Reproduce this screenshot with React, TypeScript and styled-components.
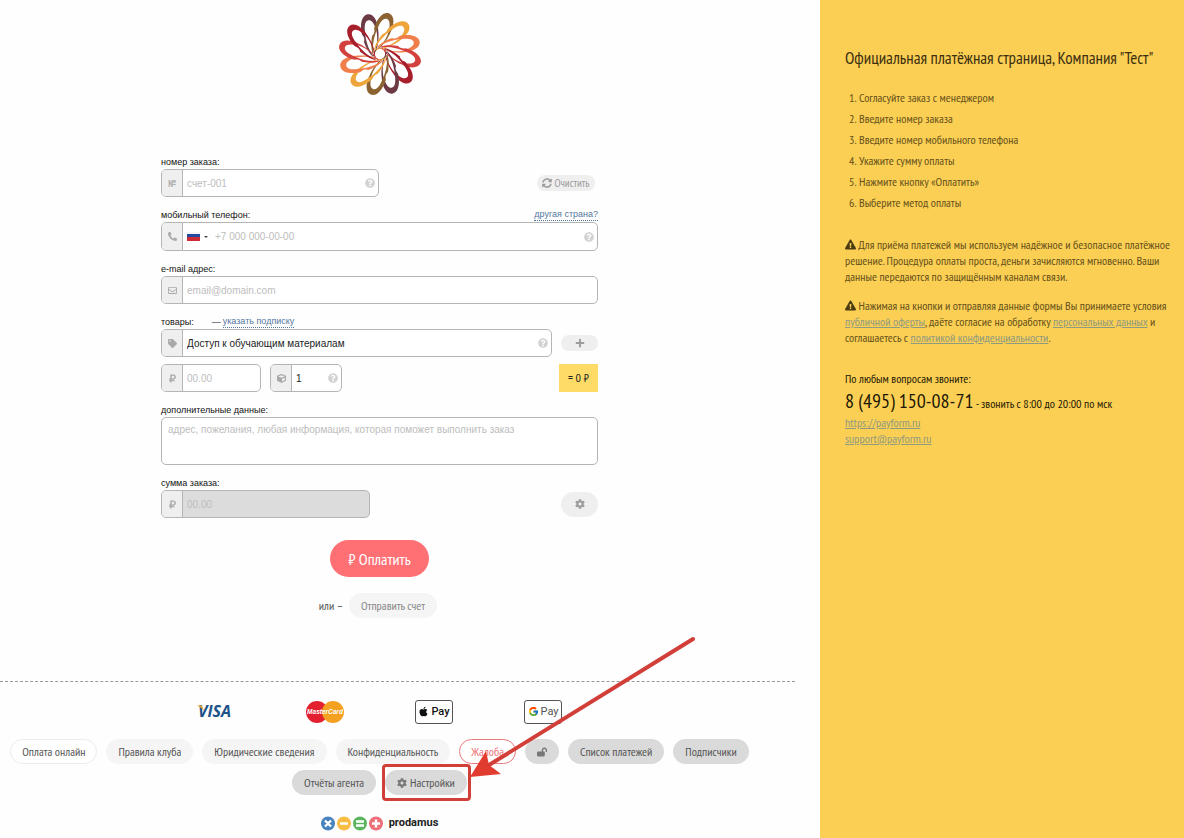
import React from "react";
import styled, { createGlobalStyle, css } from "styled-components";
import {
  FaApple,
  FaCog,
  FaCube,
  FaExclamationTriangle,
  FaLockOpen,
  FaPhoneAlt,
  FaPlus,
  FaQuestionCircle,
  FaRegEnvelope,
  FaRubleSign,
  FaSyncAlt,
  FaTag,
} from "react-icons/fa";
import { FcGoogle } from "react-icons/fc";

const narrow = `"PT Sans Narrow", "Liberation Sans Narrow", "Open Sans", sans-serif`;
const sans = `"Liberation Sans", Arial, sans-serif`;
const border = "#b5b5b5";

const GlobalStyle = createGlobalStyle`
  *, *::before, *::after { box-sizing: border-box; }
  body { margin: 0; background: #fefefe; font-family: ${narrow}; font-size: 12px; color: #555; }
  button, input, textarea { font: inherit; margin: 0; }
`;

const Page = styled.div`
  display: grid;
  grid-template-columns: minmax(0, 1fr) 364px;
  min-height: 100vh;
`;

const Main = styled.main`
  padding: 12px 25px 0 0;
`;

const Section = styled.div`
  display: flex;
  flex-direction: column;
  align-items: center;
  padding-right: 36px;
`;

const LogoBox = styled.div`
  height: 83px;
  margin-bottom: 60px;
`;

const Form = styled.form`
  width: 437px;
  max-width: 100%;
  display: flex;
  flex-direction: column;
  gap: 11px;
`;

const Field = styled.div`
  display: flex;
  flex-direction: column;
`;

const LabelRow = styled.div`
  display: flex;
  align-items: center;
  height: 14px;
  font: 9px/14px ${sans};
  color: #111;
`;

const Dash = styled.span`
  margin: 0 2px 0 18px;
`;

const DottedLink = styled.a<{ $end?: boolean }>`
  color: #54789f;
  line-height: 11px;
  text-decoration: none;
  border-bottom: 1px dotted #54789f;
  ${(p) => p.$end && css`margin-left: auto;`}
`;

const Line = styled.div<{ $gap?: number; $top?: number }>`
  display: flex;
  align-items: center;
  gap: ${(p) => p.$gap ?? 9}px;
  margin-top: ${(p) => p.$top ?? 0}px;
`;

const Push = styled.span<{ $inset?: number }>`
  margin-left: auto;
  padding-right: ${(p) => p.$inset ?? 0}px;
  display: flex;
`;

const Group = styled.div<{ $width?: number; $tall?: boolean; $filled?: boolean }>`
  display: flex;
  height: ${(p) => (p.$tall ? 29 : 28)}px;
  ${(p) => (p.$width ? css`width: ${p.$width}px;` : css`flex: 1 1 auto;`)}
  min-width: 0;
  border: 1px solid ${border};
  border-radius: 5px;
  overflow: hidden;
  background: ${(p) => (p.$filled ? "#dcdcdc" : "#fff")};
`;

const Addon = styled.span`
  flex: 0 0 21px;
  display: flex;
  align-items: center;
  justify-content: center;
  border-right: 1px solid ${border};
  background: #efefef;
  color: #a9a9a9;
  font-size: 9px;
  font-weight: bold;
`;

const Input = styled.input`
  flex: 1 1 0;
  min-width: 0;
  border: 0;
  padding: 0 4px;
  background: transparent;
  outline: none;
  font: 10px ${sans};
  color: #222;
  &::placeholder { color: #bdbdbd; opacity: 1; }
`;

const Hint = styled.span`
  display: flex;
  align-items: center;
  padding-right: 3px;
  font-size: 10px;
  color: #d2d2d2;
`;

const Country = styled.button`
  display: flex;
  align-items: center;
  gap: 4px;
  width: 28px;
  padding: 0 0 0 4px;
  border: 0;
  background: none;
`;

const Flag = styled.span`
  width: 13px;
  height: 9px;
  background: linear-gradient(#f4f4f4 0 2px, #2449a0 2px 5px, #cf2b36 5px 9px);
`;

const Caret = styled.span`
  border: 2px solid transparent;
  border-top-color: #444;
  border-bottom: 0;
`;

const Notes = styled.textarea`
  height: 48px;
  padding: 5px 6px;
  border: 1px solid ${border};
  border-radius: 5px;
  background: #fff;
  outline: none;
  resize: none;
  font: 10px/14px ${sans};
  &::placeholder { color: #bdbdbd; opacity: 1; }
`;

const Soft = styled.button<{ $height: number; $width?: number }>`
  display: flex;
  align-items: center;
  justify-content: center;
  gap: 2px;
  width: ${(p) => p.$width ?? 37}px;
  height: ${(p) => p.$height}px;
  padding: 0;
  border: 0;
  border-radius: 13px;
  background: #efefef;
  color: #9c9c9c;
  font-size: 11px;
  svg { font-size: 10px; }
`;

const Total = styled.output`
  width: 39px;
  height: 28px;
  background: #fddb66;
  color: #222;
  text-align: center;
  font-size: 12px;
  line-height: 28px;
`;

const Pay = styled.button`
  width: 99px;
  height: 37px;
  margin: 22px 0 16px;
  border: 0;
  border-radius: 19px;
  background: #ff7075;
  color: #fff;
  font-size: 16px;
`;

const pillTones = {
  outline: css`background: #fff; border-color: #ececec; color: #555;`,
  light: css`background: #f5f5f5; color: #555;`,
  dark: css`background: #dadada; color: #555;`,
  danger: css`background: #fff; border-color: #e87b7e; color: #ee7478;`,
};

const Pill = styled.button<{ $tone: keyof typeof pillTones }>`
  display: flex;
  align-items: center;
  gap: 3px;
  height: 25px;
  padding: 0 11px;
  border: 1px solid transparent;
  border-radius: 13px;
  font-size: 12px;
  white-space: nowrap;
  ${(p) => pillTones[p.$tone]}
  svg { color: #777; font-size: 10px; }
`;

const Or = styled.div`
  display: flex;
  align-items: center;
  gap: 6px;
  padding-right: 3px;
  button { color: #888; }
`;

const Divider = styled.hr`
  margin: 63px 0 17px;
  border: 0;
  border-top: 1px dashed #999;
`;

const Brands = styled.div`
  display: flex;
  align-items: center;
  gap: 71px;
  height: 25px;
  margin-bottom: 15px;
`;

const PayMark = styled.span<{ $strong?: boolean }>`
  display: flex;
  align-items: center;
  justify-content: center;
  gap: 2px;
  width: 38px;
  height: 24px;
  border: 1px solid #555;
  border-radius: 3px;
  background: #fff;
  color: ${(p) => (p.$strong ? "#111" : "#555")};
  font: ${(p) => (p.$strong ? 500 : 400)} 11px Roboto, ${sans};
`;

const Links = styled.nav`
  display: flex;
  flex-direction: column;
  gap: 6px;
`;

const PillRow = styled.div`
  display: flex;
  flex-wrap: wrap;
  justify-content: center;
  gap: 6px 9px;
`;

const Marked = styled.div`
  position: relative;
  &::after {
    content: "";
    position: absolute;
    inset: -6px -4px -6px -3px;
    border: 3px solid #d13f38;
    border-radius: 4px;
    pointer-events: none;
  }
`;

const Arrow = styled.svg`
  position: absolute;
  left: 100%;
  bottom: 12px;
  z-index: 1;
  pointer-events: none;
`;

const Brand = styled.a`
  display: flex;
  align-items: center;
  gap: 6px;
  margin: 20px 0 7px;
  color: #222;
  font: bold 11px/16px Roboto, sans-serif;
  text-decoration: none;
`;

const Side = styled.aside`
  padding: 46px 10px 0 25px;
  background: #fbcf54;
  color: #65501a;
  font-size: 12px;
  line-height: 16px;
`;

const Title = styled.h1`
  margin: 0 0 17px;
  color: #3d3010;
  font-size: 17px;
  font-weight: normal;
  line-height: 24px;
`;

const Steps = styled.ol`
  margin: 0 0 24px;
  padding: 0;
  list-style: none;
  counter-reset: step;
  line-height: 21px;
  li { counter-increment: step; padding-left: 4px; }
  li::before { content: counter(step) "."; display: inline-block; width: 10px; }
`;

const Note = styled.p`
  margin: 0 0 13px;
  svg { color: #4b3b12; font-size: 11px; vertical-align: -1px; }
`;

const SideLink = styled.a`
  color: #8f9a80;
`;

const Contacts = styled.address`
  margin-top: 25px;
  color: #1d1705;
  font-style: normal;
`;

const Phone = styled.div`
  margin-top: 3px;
  line-height: 22px;
  b { font-size: 20px; font-weight: normal; }
`;

const petals = [
  "#6b3a45", "#8c6330", "#eda53c", "#f07f4c", "#d3413f", "#a81f2c",
  "#6b3a45", "#8c6330", "#eda53c", "#f07f4c", "#d3413f", "#a81f2c",
];

const petalTurn = (i: number) => `rotate(${-17 + i * 30}) translate(0 -41.5) rotate(10)`;

const FlowerLogo = () => (
  <svg width="84" height="84" viewBox="-42 -42 84 84" role="img" aria-label="Логотип">
    {petals.map((color, i) => (
      <g key={i} transform={petalTurn(i)}>
        <path
          fill={color}
          fillRule="evenodd"
          d="M0 0C5.500 0 8.500 7 8.500 15C8.500 27 5 37 0 43C-5 37 -8.500 27 -8.500 15C-8.500 7 -5.500 0 0 0ZM0 6C-4 6 -5 12 -5 17C-5.500 27 -3.500 35 0 41.500C4 36 7.500 27 6.500 17C5.500 12 4 6 0 6Z"
        />
      </g>
    ))}
    {petals.map((_, i) => (
      <g key={i} transform={petalTurn(i)}>
        <path
          fill="#fff"
          d="M0 6.500C-3.500 6.500 -4.500 12 -4.200 16C-4 20 -2 22 0 22C2 22 4.500 20 4.600 16C4.500 12 3.500 6.500 0 6.500Z"
        />
      </g>
    ))}
    <circle r="5" fill="#fff" />
  </svg>
);

const Visa = () => (
  <svg width="38" height="24" viewBox="0 0 38 24" role="img" aria-label="VISA">
    <text x="1" y="17" fontFamily="Open Sans, sans-serif" fontSize="16" fontWeight="700" fontStyle="italic" fill="#1c5288">VISA</text>
    <path d="M0 5.500H5L7 11Q4 7 0 5.500Z" fill="#e9a63a" />
  </svg>
);

const MasterCard = () => (
  <svg width="38" height="24" viewBox="0 0 38 24" role="img" aria-label="MasterCard">
    <circle cx="11" cy="12" r="11" fill="#e3202f" />
    <circle cx="27" cy="12" r="11" fill="#f4a020" />
    <text x="19" y="14" textAnchor="middle" fontFamily="Liberation Sans, sans-serif" fontSize="6.500" fontWeight="bold" fontStyle="italic" fill="#fff">MasterCard</text>
  </svg>
);

const ProdamusMark = () => (
  <svg width="62" height="15" viewBox="0 0 62 15" aria-hidden="true">
    <circle cx="7" cy="7.500" r="7" fill="#4883bd" />
    <circle cx="23" cy="7.500" r="7" fill="#f9bd45" />
    <circle cx="39" cy="7.500" r="7" fill="#5cb562" />
    <circle cx="55" cy="7.500" r="7" fill="#ec6f7a" />
    <g stroke="#fff" strokeWidth="2.400">
      <path d="M4 4.500L10 10.500M10 4.500L4 10.500M19 7.500H27M35 5.500H43M35 9.500H43M51 7.500H59M55 3.500V11.500" />
    </g>
  </svg>
);

const Help = () => (
  <Hint>
    <FaQuestionCircle />
  </Hint>
);

const steps = [
  "Согласуйте заказ с менеджером",
  "Введите номер заказа",
  "Введите номер мобильного телефона",
  "Укажите сумму оплаты",
  "Нажмите кнопку «Оплатить»",
  "Выберите метод оплаты",
];

export default function App() {
  return (
    <Page>
      <GlobalStyle />
      <Main>
        <Section>
          <LogoBox>
            <FlowerLogo />
          </LogoBox>
          <Form onSubmit={(e) => e.preventDefault()}>
            <Field>
              <LabelRow>
                <label htmlFor="order">номер заказа:</label>
              </LabelRow>
              <Line>
                <Group $width={218}>
                  <Addon>№</Addon>
                  <Input id="order" placeholder="счет-001" />
                  <Help />
                </Group>
                <Push $inset={3}>
                  <Soft type="reset" $height={16} $width={58}>
                    <FaSyncAlt /> Очистить
                  </Soft>
                </Push>
              </Line>
            </Field>
            <Field>
              <LabelRow>
                <label htmlFor="phone">мобильный телефон:</label>
                <DottedLink href="#country" $end>другая страна?</DottedLink>
              </LabelRow>
              <Group $tall>
                <Addon><FaPhoneAlt /></Addon>
                <Country type="button" aria-label="Россия">
                  <Flag />
                  <Caret />
                </Country>
                <Input id="phone" type="tel" placeholder="+7 000 000-00-00" />
                <Help />
              </Group>
            </Field>
            <Field>
              <LabelRow>
                <label htmlFor="email">e-mail адрес:</label>
              </LabelRow>
              <Line>
                <Group>
                  <Addon><FaRegEnvelope /></Addon>
                  <Input id="email" type="email" placeholder="email@domain.com" />
                </Group>
              </Line>
            </Field>
            <Field>
              <LabelRow>
                <label htmlFor="goods">товары:</label>
                <Dash>—</Dash>
                <DottedLink href="#subscription">указать подписку</DottedLink>
              </LabelRow>
              <Line $gap={9}>
                <Group>
                  <Addon><FaTag /></Addon>
                  <Input id="goods" defaultValue="Доступ к обучающим материалам" />
                  <Help />
                </Group>
                <Soft type="button" $height={16} aria-label="Добавить товар"><FaPlus /></Soft>
              </Line>
              <Line $top={7}>
                <Group $width={100}>
                  <Addon><FaRubleSign /></Addon>
                  <Input aria-label="Цена" placeholder="00.00" />
                </Group>
                <Group $width={72}>
                  <Addon><FaCube /></Addon>
                  <Input aria-label="Количество" defaultValue="1" />
                  <Help />
                </Group>
                <Push>
                  <Total>= 0 ₽</Total>
                </Push>
              </Line>
            </Field>
            <Field>
              <LabelRow>
                <label htmlFor="notes">дополнительные данные:</label>
              </LabelRow>
              <Notes id="notes" placeholder="адрес, пожелания, любая информация, которая поможет выполнить заказ" />
            </Field>
            <Field>
              <LabelRow>
                <label htmlFor="sum">сумма заказа:</label>
              </LabelRow>
              <Line>
                <Group $width={209} $filled>
                  <Addon><FaRubleSign /></Addon>
                  <Input id="sum" placeholder="00.00" readOnly />
                </Group>
                <Push>
                  <Soft type="button" $height={25} aria-label="Параметры"><FaCog /></Soft>
                </Push>
              </Line>
            </Field>
          </Form>
          <Pay type="submit">₽ Оплатить</Pay>
          <Or>
            или –
            <Pill type="button" $tone="light">Отправить счет</Pill>
          </Or>
        </Section>
        <Divider />
        <Section>
          <Brands>
            <Visa />
            <MasterCard />
            <PayMark $strong><FaApple /> Pay</PayMark>
            <PayMark><FcGoogle /> Pay</PayMark>
          </Brands>
          <Links>
            <PillRow>
              <Pill $tone="outline">Оплата онлайн</Pill>
              <Pill $tone="light">Правила клуба</Pill>
              <Pill $tone="light">Юридические сведения</Pill>
              <Pill $tone="light">Конфиденциальность</Pill>
              <Pill $tone="danger">Жалоба</Pill>
              <Pill $tone="dark" aria-label="Доступ"><FaLockOpen /></Pill>
              <Pill $tone="dark">Список платежей</Pill>
              <Pill $tone="dark">Подписчики</Pill>
            </PillRow>
            <PillRow>
              <Pill $tone="dark">Отчёты агента</Pill>
              <Marked>
                <Pill $tone="dark"><FaCog /> Настройки</Pill>
                <Arrow width="230" height="150" viewBox="0 0 230 150" aria-hidden="true">
                  <path d="M226 6L22 132" stroke="#d13f38" strokeWidth="4" strokeLinecap="round" />
                  <path d="M3 144L19 118L22 132L34 141Z" fill="#e23b30" />
                </Arrow>
              </Marked>
            </PillRow>
          </Links>
          <Brand href="#prodamus">
            <ProdamusMark /> prodamus
          </Brand>
        </Section>
      </Main>
      <Side>
        <Title>Официальная платёжная страница, Компания "Тест"</Title>
        <Steps>
          {steps.map((s) => (
            <li key={s}>{s}</li>
          ))}
        </Steps>
        <Note>
          <FaExclamationTriangle /> Для приёма платежей мы используем надёжное и безопасное платёжное
          решение. Процедура оплаты проста, деньги зачисляются мгновенно. Ваши
          данные передаются по защищённым каналам связи.
        </Note>
        <Note>
          <FaExclamationTriangle /> Нажимая на кнопки и отправляя данные формы Вы принимаете условия{" "}
          <SideLink href="#offer">публичной оферты</SideLink>, даёте согласие на обработку{" "}
          <SideLink href="#personal">персональных данных</SideLink> и соглашаетесь с{" "}
          <SideLink href="#privacy">политикой конфиденциальности</SideLink>.
        </Note>
        <Contacts>
          По любым вопросам звоните:
          <Phone>
            <b>8 (495) 150-08-71</b> - звонить с 8:00 до 20:00 по мск
          </Phone>
          <SideLink href="https://payform.ru">https://payform.ru</SideLink>
          <br />
          <SideLink href="mailto:support@payform.ru">support@payform.ru</SideLink>
        </Contacts>
      </Side>
    </Page>
  );
}
